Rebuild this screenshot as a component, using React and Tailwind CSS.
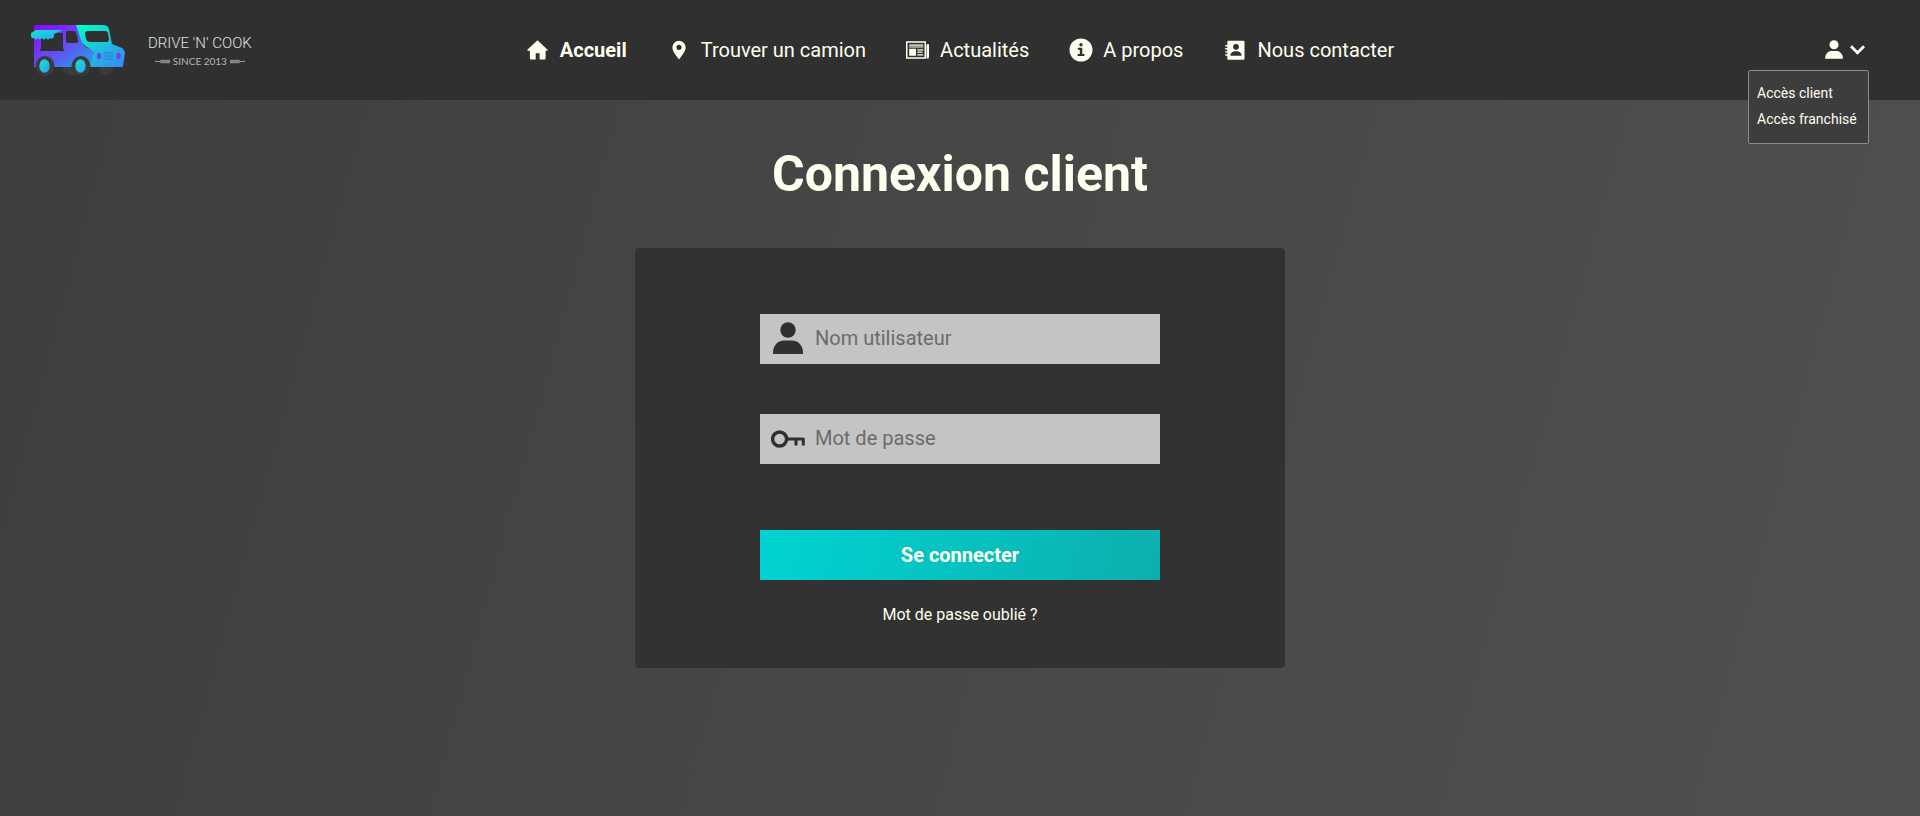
import { useState } from "react";

function HomeIcon() {
  return (
    <svg viewBox="0 0 21 20" className="h-5 w-[21px]" fill="currentColor" aria-hidden="true">
      <path d="M10.5.2 20.3 9.4a.7.7 0 0 1-.5 1.3H18.600V18.600a.9.9 0 0 1-.9.9H12.600V13.200H8.700V19.500H3.800a.9.9 0 0 1-.9-.9V10.700H1.100a.7.7 0 0 1-.5-1.300Z" />
    </svg>
  );
}

function PinIcon() {
  return (
    <svg viewBox="0 0 14 20" className="h-5 w-[14px]" fill="currentColor" aria-hidden="true">
      <path fillRule="evenodd" d="M7 .8a6.600 6.600 0 0 1 6.600 6.600C13.600 12 8.600 16.500 7 19.600 5.400 16.500.4 12 .4 7.400A6.600 6.600 0 0 1 7 .8Zm0 3.900a2.600 2.600 0 1 0 0 5.200 2.600 2.600 0 0 0 0-5.200Z" />
    </svg>
  );
}

function NewsIcon() {
  return (
    <svg viewBox="0 0 24 18" className="h-[18px] w-6" aria-hidden="true">
      <rect x=".75" y="1" width="18.500" height="16" fill="none" stroke="currentColor" strokeWidth="1.500" />
      <path fill="currentColor" d="M20.500 3.300H23V16.500a1 1 0 0 1-1 1H20.500Z M3.200 7.800H10V14.800H3.200Z" />
      <path stroke="currentColor" strokeWidth="1.200" d="M3.200 4.200H17.200M3.200 6H17.200M11.300 8.800H17.200M11.300 11.200H16.500M11.300 13.800H17.200" />
    </svg>
  );
}

function InfoIcon() {
  return (
    <svg viewBox="0 0 24 24" className="size-6" aria-hidden="true">
      <circle cx="12" cy="12" r="11.500" fill="currentColor" />
      <circle cx="12" cy="6.700" r="1.700" fill="#303030" />
      <path d="M8.800 9.800H13.300V15.900H15.400V17.900H8.600V15.900H10.800V11.800H8.800Z" fill="#303030" />
    </svg>
  );
}

function ContactIcon() {
  return (
    <svg viewBox="0 0 20 20" className="size-5" aria-hidden="true">
      <path fill="currentColor" d="M3.300.7H18.500a1 1 0 0 1 1 1V18.700a1 1 0 0 1-1 1H3.300a1 1 0 0 1-1-1V1.700a1 1 0 0 1 1-1Z" />
      <path stroke="currentColor" strokeWidth="1.400" d="M.2 5.700H3M.2 8.800H3M.2 11.900H3M.2 15H3" />
      <circle cx="11" cy="6.800" r="2.900" fill="#303030" />
      <path fill="#303030" d="M5.400 15.700C5.400 12.600 8 11.200 11 11.200S16.600 12.600 16.600 15.700Z" />
    </svg>
  );
}

function UserIcon({ className }) {
  return (
    <svg viewBox="0 0 30 34" className={className} fill="currentColor" aria-hidden="true">
      <circle cx="15" cy="8" r="7.700" />
      <path d="M0 32V30.500C0 23 5.500 18.500 11 18.500H19C24.500 18.500 30 23 30 30.500V32Z" />
    </svg>
  );
}

function KeyIcon() {
  return (
    <svg viewBox="0 0 34 18" className="h-[18px] w-[34px]" fill="none" stroke="currentColor" strokeLinejoin="round" aria-hidden="true">
      <circle cx="8.600" cy="9" r="7" strokeWidth="3.400" />
      <path d="M16 9H32.300V15.500M25 9V15.500" strokeWidth="3" />
    </svg>
  );
}

function TruckLogo() {
  return (
    <svg viewBox="0 -1 96 52" className="h-[52px] w-24" aria-hidden="true">
      <defs>
        <linearGradient id="body" x1="0" y1="0" x2="1" y2="1">
          <stop offset="0" stopColor="#9400ff" />
          <stop offset=".45" stopColor="#6a45f5" />
          <stop offset="1" stopColor="#1fa8e8" />
        </linearGradient>
        <linearGradient id="cab" x1="0" y1="0" x2=".8" y2="1">
          <stop offset="0" stopColor="#00ffc0" />
          <stop offset="1" stopColor="#3391f2" />
        </linearGradient>
        <linearGradient id="wheel" x1="0" y1="0" x2="1" y2="1">
          <stop offset="0" stopColor="#12e6d0" />
          <stop offset="1" stopColor="#2e9ff0" />
        </linearGradient>
      </defs>
      <path fill="#3b3b3b" d="M33 40H54V46Q52 50 45 50Q36 50 33 46ZM69 40H84Q83 50 76 50T69 40Z" />
      <path fill="url(#body)" d="M6 0H47L53 18Q54 22 58 23L64 26V42H4V3Q4 0 6 0Z" />
      <path fill="url(#cab)" d="M46 0H73Q78 0 79 4L82 19L92 23Q95 25 95 28L93 41Q93 42 91 42H60L64 27L57 22Q53 20 51 15Z" />
      <path fill="#303030" d="M11 8H33V24H34V26H10V24H11ZM37 6H44Q46 6 46 8L48 15Q49 18 46 18H37Q36 18 36 16V8Q36 6 37 6ZM58 6H75Q78 6 78 9L79 14Q79 17 76 17H61Q57 17 56 14L55 9Q55 6 58 6Z" />
      <path fill="url(#wheel)" d="M6 5H33L24 9V12Q22 15 20 13Q18 16 16 13Q14 16 12 13Q10 16 8 13Q6 16 4 13Q1 14 1 11V8Z" />
      <ellipse cx="15" cy="41" rx="9.500" ry="10" fill="#3b3b3b" />
      <ellipse cx="51" cy="41" rx="9.500" ry="10" fill="#3b3b3b" />
      <ellipse cx="14.500" cy="41" rx="5.200" ry="6.800" fill="url(#wheel)" />
      <ellipse cx="50.500" cy="41" rx="5.200" ry="6.800" fill="url(#wheel)" />
      <ellipse cx="69" cy="31" rx="2.200" ry="3.200" fill="#6c45e8" />
      <ellipse cx="88.500" cy="31" rx="2.200" ry="3.200" fill="#6c45e8" />
      <path stroke="#3974cf" strokeWidth="1" d="M73 28H83M74 31H83M73 34H83" />
    </svg>
  );
}

function Utensil({ className }) {
  return (
    <svg viewBox="0 0 18 5" className={className} aria-hidden="true">
      <path stroke="#999999" strokeWidth="1.200" d="M0 2.500H7" />
      <path fill="#858585" d="M6 .5H17V4.500H6Z" />
    </svg>
  );
}

const links = [
  { label: "Accueil", Icon: HomeIcon, active: true },
  { label: "Trouver un camion", Icon: PinIcon },
  { label: "Actualités", Icon: NewsIcon },
  { label: "A propos", Icon: InfoIcon },
  { label: "Nous contacter", Icon: ContactIcon },
];

function Field({ id, type, label, icon }) {
  return (
    <div className="flex h-[50px] items-center bg-[#c4c4c4]">
      <label htmlFor={id} aria-label={label} className="flex w-[55px] shrink-0 justify-center text-[#303030]">
        {icon}
      </label>
      <input
        id={id}
        type={type}
        placeholder={label}
        className="h-full min-w-0 flex-1 bg-transparent pb-0.5 text-xl text-[#303030] outline-none placeholder:text-[#6b6b6b]"
      />
    </div>
  );
}

export default function App() {
  const [open, setOpen] = useState(true);
  return (
    <div className="flex min-h-screen flex-col bg-linear-[105deg,#3e3e3e,#505050] font-[Roboto,sans-serif] text-[#ffffef]">
      <header className="grid h-[100px] grid-cols-[1fr_auto_1fr] items-center bg-[#303030] px-[30px]">
        <a href="#accueil" aria-label="Drive 'N' Cook" className="flex items-center gap-[22px]">
          <TruckLogo />
          <span className="flex flex-col items-center pt-0.5">
            <span className="text-[15px] leading-5 font-light text-[#e0e0e0]">DRIVE 'N' COOK</span>
            <span className="flex items-center gap-0.5 font-[Lato,sans-serif] text-[10px] leading-4 text-[#b5b5b5]">
              <Utensil className="h-[5px] w-4" />
              SINCE 2013
              <Utensil className="h-[5px] w-4 rotate-180" />
            </span>
          </span>
        </a>
        <nav className="flex items-center gap-10 text-xl">
          {links.map(({ label, Icon, active }) => (
            <a key={label} href="#" className={active ? "flex items-center gap-2.5 font-bold" : "flex items-center gap-2.5"}>
              <span className="flex w-6 justify-center">
                <Icon />
              </span>
              {label}
            </a>
          ))}
        </nav>
        <div className="relative mr-[21px] justify-self-end">
          <button
            type="button"
            aria-label="Mon compte"
            aria-expanded={open}
            onClick={() => setOpen(!open)}
            className="mr-1 flex items-center gap-[7px]"
          >
            <UserIcon className="h-5 w-[18px]" />
            <svg viewBox="0 0 15 10" className="h-2.5 w-[15px]" fill="none" stroke="currentColor" strokeWidth="2.800" aria-hidden="true">
              <path d="M1 1.300 7.500 7.800 14 1.300" />
            </svg>
          </button>
          {open && (
            <div className="absolute right-0 top-full mt-2.5 flex h-[74px] w-[121px] flex-col gap-1.5 rounded-xs border border-[#8c8c8c] bg-[#3d3d3d] px-2 pt-3 text-sm">
              <a href="#client" className="whitespace-nowrap">Accès client</a>
              <a href="#franchise" className="whitespace-nowrap">Accès franchisé</a>
            </div>
          )}
        </div>
      </header>
      <main className="flex flex-col items-center pt-11">
        <h1 className="text-[50px] leading-[60px] font-bold">Connexion client</h1>
        <form
          onSubmit={(e) => e.preventDefault()}
          className="mt-11 flex w-full max-w-[650px] flex-col items-center rounded-sm bg-[#323232] pt-[66px] pb-[41px]"
        >
          <div className="flex w-full max-w-[400px] flex-col">
            <div className="flex flex-col gap-[50px]">
              <Field id="user" type="text" label="Nom utilisateur" icon={<UserIcon className="h-[34px] w-[30px]" />} />
              <Field id="password" type="password" label="Mot de passe" icon={<KeyIcon />} />
            </div>
            <button type="submit" className="mt-[66px] h-[50px] bg-linear-[105deg,#00d4d2,#0cafae] text-xl font-bold">
              Se connecter
            </button>
          </div>
          <a href="#oubli" className="mt-[23px] text-base">Mot de passe oublié ?</a>
        </form>
      </main>
    </div>
  );
}
